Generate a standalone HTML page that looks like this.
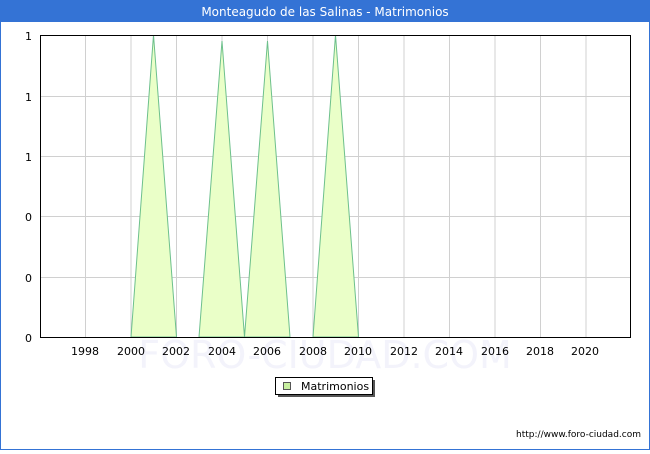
<!DOCTYPE html><html><head><style>body{margin:0;width:650px;height:450px;overflow:hidden;background:#fff;font-family:"DejaVu Sans","Liberation Sans",sans-serif}</style></head><body>
<svg width="650" height="450" xmlns="http://www.w3.org/2000/svg" font-family="DejaVu Sans, Liberation Sans, sans-serif">
<rect x="0" y="0" width="650" height="450" fill="#3473d5"/>
<rect x="1" y="22" width="648" height="427" fill="#fff"/>
<text x="325" y="16" text-anchor="middle" fill="#fff" font-size="12">Monteagudo de las Salinas - Matrimonios</text>
<text x="325" y="368" text-anchor="middle" fill="#f3f3fb" font-size="38">FORO-CIUDAD.COM</text>
<g stroke="#d0d0d0" stroke-width="1">
<line x1="85.5" y1="35" x2="85.5" y2="337"/><line x1="131" y1="35" x2="131" y2="337"/><line x1="176.5" y1="35" x2="176.5" y2="337"/><line x1="222" y1="35" x2="222" y2="337"/><line x1="267.5" y1="35" x2="267.5" y2="337"/><line x1="313" y1="35" x2="313" y2="337"/><line x1="358.5" y1="35" x2="358.5" y2="337"/><line x1="404" y1="35" x2="404" y2="337"/><line x1="449.5" y1="35" x2="449.5" y2="337"/><line x1="495" y1="35" x2="495" y2="337"/><line x1="540.5" y1="35" x2="540.5" y2="337"/><line x1="586" y1="35" x2="586" y2="337"/>
<line x1="40" y1="96.5" x2="630" y2="96.5"/><line x1="40" y1="156.5" x2="630" y2="156.5"/><line x1="40" y1="216.5" x2="630" y2="216.5"/><line x1="40" y1="277.5" x2="630" y2="277.5"/>
</g>
<g fill="#eaffc8" stroke="#6dc08c" stroke-width="1">
<polygon points="131,337 153.5,35 176.5,337"/>
<polygon points="199,337 222,41 244.5,337"/>
<polygon points="244.5,337 267.5,41 290,337"/>
<polygon points="313,337 335.5,35 358.5,337"/>
</g>
<rect x="40.5" y="35.5" width="590" height="302" fill="none" stroke="#000" stroke-width="1"/>
<g font-size="11" fill="#000" text-anchor="end">
<text x="32" y="40">1</text><text x="32" y="101">1</text><text x="32" y="161">1</text><text x="32" y="221">0</text><text x="32" y="282">0</text><text x="32" y="342">0</text>
</g>
<g font-size="11" fill="#000" text-anchor="middle">
<text x="85" y="355">1998</text><text x="131" y="355">2000</text><text x="176" y="355">2002</text><text x="222" y="355">2004</text><text x="267" y="355">2006</text><text x="313" y="355">2008</text><text x="358" y="355">2010</text><text x="404" y="355">2012</text><text x="449" y="355">2014</text><text x="495" y="355">2016</text><text x="540" y="355">2018</text><text x="585" y="355">2020</text>
</g>
<rect x="278" y="380" width="97" height="17" fill="#555"/>
<rect x="275.5" y="377.5" width="97" height="17" fill="#fff" stroke="#000"/>
<rect x="283.5" y="382.5" width="7" height="7" fill="#c8f0a0" stroke="#555"/>
<text x="301" y="390" font-size="11">Matrimonios</text>
<text x="641" y="437" font-size="9" text-anchor="end" fill="#000">http://www.foro-ciudad.com</text>
</svg></body></html>
